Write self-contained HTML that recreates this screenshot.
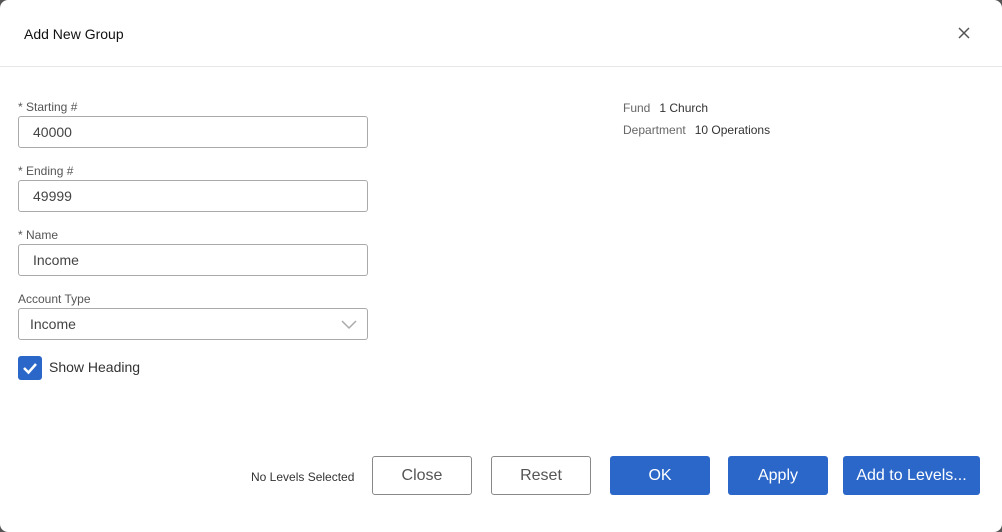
<!DOCTYPE html>
<html><head><style>
body{margin:0;width:1002px;height:532px;background:#555;font-family:"Liberation Sans",sans-serif;overflow:hidden}
.dlg{position:absolute;left:0;top:0;width:1002px;height:532px;background:#fff;border-radius:8px}
.title{position:absolute;left:24px;top:26px;font-size:14px;color:#111}
.x{position:absolute;left:957px;top:26px}
.hr{position:absolute;left:0;right:0;top:66px;height:1px;background:#e6e6e6}
.lbl{position:absolute;left:18px;font-size:12px;color:#555}
.inp{position:absolute;left:18px;width:348px;height:30px;border:1px solid #aaa;border-radius:3px;font-size:14px;color:#444;line-height:30px;box-sizing:content-box}
.r{position:absolute;font-size:12px;color:#666}
.r b{font-weight:normal;color:#333;margin-left:6px}
.btn{position:absolute;top:456px;height:39px;border-radius:3px;font-size:16px;line-height:40px;text-align:center;box-sizing:border-box}
.w{background:#fff;border:1px solid #888;color:#555;line-height:38px}
.b{background:#2b67c9;color:#fff}
</style></head><body><div class="dlg">
<div class="title">Add New Group</div>
<svg class="x" width="14" height="14" viewBox="0 0 14 14"><path d="M2 2L12 12M12 2L2 12" stroke="#555" stroke-width="1.5"/></svg>
<div class="hr"></div>
<div class="lbl" style="top:100px">* Starting #</div>
<div class="inp" style="top:116px;padding-left:14px;width:334px">40000</div>
<div class="lbl" style="top:164px">* Ending #</div>
<div class="inp" style="top:180px;padding-left:14px;width:334px">49999</div>
<div class="lbl" style="top:228px">* Name</div>
<div class="inp" style="top:244px;padding-left:14px;width:334px">Income</div>
<div class="lbl" style="top:292px">Account Type</div>
<div class="inp" style="top:308px;padding-left:11px;width:337px">Income
<svg style="position:absolute;right:10px;top:11px" width="16" height="10" viewBox="0 0 16 10"><path d="M1 1L8 8L15 1" stroke="#aaa" stroke-width="1.5" fill="none"/></svg></div>
<div style="position:absolute;left:18px;top:356px;width:24px;height:24px;background:#2b67c9;border-radius:3px"><svg width="24" height="24" viewBox="0 0 24 24"><path d="M6 12L10.5 16.5L18 8" stroke="#fff" stroke-width="2.5" fill="none"/></svg></div>
<div style="position:absolute;left:49px;top:359px;font-size:14px;color:#333">Show Heading</div>
<div class="r" style="left:623px;top:101px">Fund<b style="margin-left:9px">1 Church</b></div>
<div class="r" style="left:623px;top:123px">Department<b style="margin-left:9px">10 Operations</b></div>
<div class="r" style="left:251px;top:470px;color:#333">No Levels Selected</div>
<div class="btn w" style="left:372px;width:100px">Close</div>
<div class="btn w" style="left:491px;width:100px">Reset</div>
<div class="btn b" style="left:610px;width:100px">OK</div>
<div class="btn b" style="left:728px;width:100px">Apply</div>
<div class="btn b" style="left:843px;width:137px">Add to Levels...</div>
</div></body></html>
